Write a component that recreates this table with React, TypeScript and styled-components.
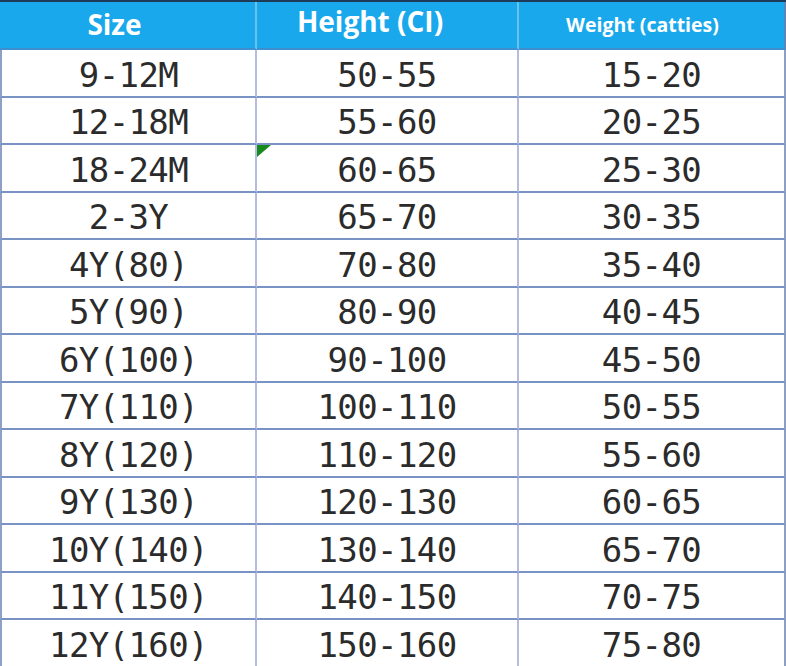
import React from "react";
import styled, { createGlobalStyle } from "styled-components";

type SizeRow = {
  size: string;
  height: string;
  weight: string;
};

const rows: SizeRow[] = [
  { size: "9-12M", height: "50-55", weight: "15-20" },
  { size: "12-18M", height: "55-60", weight: "20-25" },
  { size: "18-24M", height: "60-65", weight: "25-30" },
  { size: "2-3Y", height: "65-70", weight: "30-35" },
  { size: "4Y(80)", height: "70-80", weight: "35-40" },
  { size: "5Y(90)", height: "80-90", weight: "40-45" },
  { size: "6Y(100)", height: "90-100", weight: "45-50" },
  { size: "7Y(110)", height: "100-110", weight: "50-55" },
  { size: "8Y(120)", height: "110-120", weight: "55-60" },
  { size: "9Y(130)", height: "120-130", weight: "60-65" },
  { size: "10Y(140)", height: "130-140", weight: "65-70" },
  { size: "11Y(150)", height: "140-150", weight: "70-75" },
  { size: "12Y(160)", height: "150-160", weight: "75-80" },
];

export default function App() {
  return (
    <>
      <GlobalStyle />
      <Chart>
        <HeaderCell $size={28} $lift={2} $shift={26}>Size</HeaderCell>
        <HeaderCell $size={28} $lift={8} $shift={34}>Height (CI)</HeaderCell>
        <HeaderCell $size={19.5} $lift={2} $shift={18} $last>
          Weight (catties)
        </HeaderCell>
        {rows.map((row, index) => (
          <React.Fragment key={row.size}>
            <Cell $first>{row.size}</Cell>
            <Cell>
              {index === 2 && <ErrorMark />}
              {row.height}
            </Cell>
            <Cell $last>{row.weight}</Cell>
          </React.Fragment>
        ))}
      </Chart>
    </>
  );
}

const GlobalStyle = createGlobalStyle`
  html, body {
    margin: 0;
    padding: 0;
    background: #ffffff;
  }
  * {
    box-sizing: border-box;
  }
`;

const Chart = styled.div`
  display: grid;
  grid-template-columns: 257px 262px 1fr;
  grid-template-rows: 48px;
  grid-auto-rows: 47.5px;
  width: 786px;
  height: 666px;
  overflow: hidden;
  border-top: 2px solid #1d3b58;
  background: #ffffff;
`;

const HeaderCell = styled.div<{ $size: number; $lift: number; $shift: number; $last?: boolean }>`
  display: flex;
  align-items: center;
  justify-content: center;
  padding-bottom: ${({ $lift }) => $lift}px;
  padding-right: ${({ $shift }) => $shift}px;
  background: #1aa8ec;
  color: #ffffff;
  font-family: "Open Sans", "Noto Sans", sans-serif;
  font-weight: 700;
  font-size: ${({ $size }) => $size}px;
  border-right: ${({ $last }) => ($last ? "2px solid #5a86b8" : "2px solid #6cc0ee")};
  border-bottom: 2px solid #3e8fcf;
`;

const Cell = styled.div<{ $first?: boolean; $last?: boolean }>`
  position: relative;
  display: flex;
  align-items: center;
  justify-content: center;
  padding-top: 4px;
  font-family: "DejaVu Sans Mono", "Liberation Mono", monospace;
  font-size: 34px;
  line-height: 1;
  color: #2b2b2b;
  letter-spacing: -0.6px;
  border-bottom: 2px solid #7893c4;
  border-right: 2px solid ${({ $last }) => ($last ? "#8e9fc4" : "#b4bde0")};
  border-left: ${({ $first }) => ($first ? "2px solid #8f9fc6" : "none")};
`;

const ErrorMark = styled.span`
  position: absolute;
  top: 0;
  left: 0;
  width: 0;
  height: 0;
  border-top: 12px solid #178a1e;
  border-right: 14px solid transparent;
`;
